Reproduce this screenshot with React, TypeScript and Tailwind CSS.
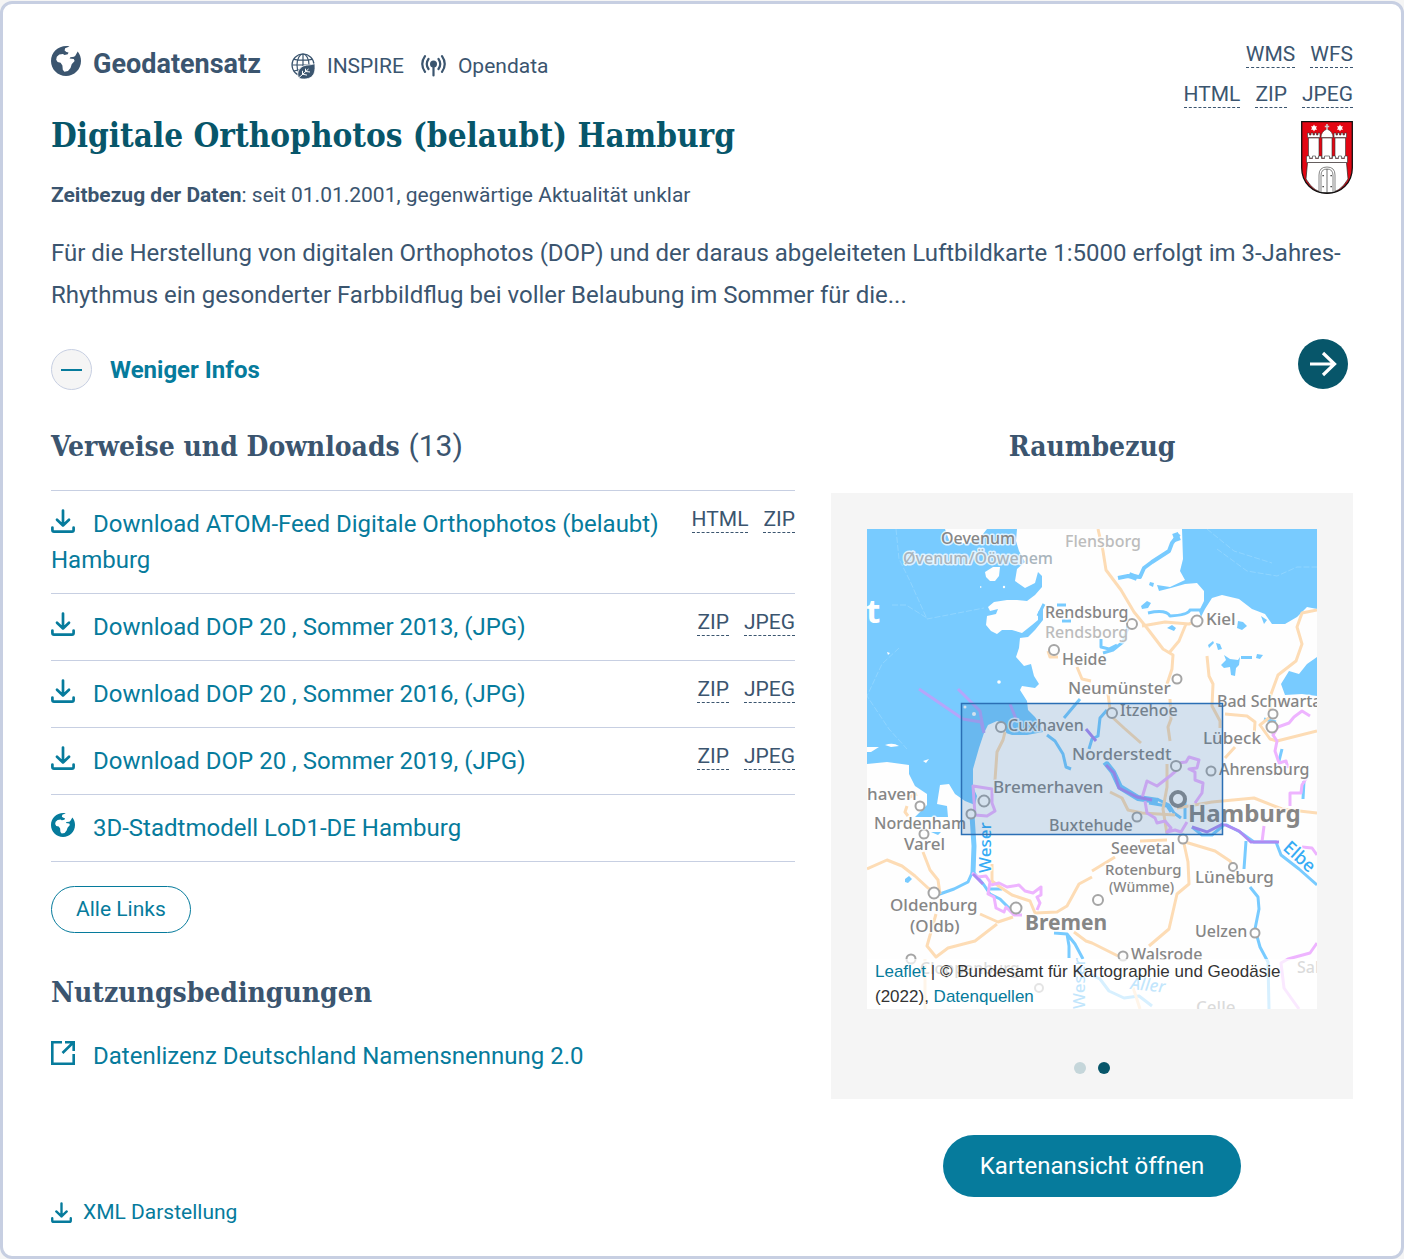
import React from "react";

const SLAB = "font-['Roboto_Slab','DejaVu_Serif_Condensed','DejaVu_Serif',serif] font-bold";

function GlobeIcon({ className }: { className: string }) {
  return (
    <svg viewBox="0 0 30 30" className={className} aria-hidden="true">
      <path
        fill="currentColor"
        d="M18.500.4C8.500-1.500 0 5.800 0 15c0 8.300 6.700 15 15 15s15-6.700 15-15c0-3.500-1-6.600-3.300-9.500l-2.400 4.300-1.300 1-3.600.4-.8 1.300 4.200.6.800 1.800-2.900 3.400-1.200 3.600-2.500 3.200-3.600.6-1.600-2-.4-4.200-1.800-2.700-3-.7-1.400-2.300.6-3 2.500-2.200 3.600-.6 1.600 1 3.300-.7.700-1.700-2.100-.7-1.800-1.300.5-2.400z"
      />
    </svg>
  );
}

function InspireIcon() {
  return (
    <svg viewBox="0 0 24 26" className="w-6 h-[26px]" aria-hidden="true">
      <g fill="none" stroke="currentColor" strokeWidth="1.200">
        <circle cx="12" cy="12" r="11" />
        <ellipse cx="12" cy="12" rx="6" ry="11" />
        <path d="M12 1v22M1 12h22M3 6.300q9 1.800 18 0M3 18q5-1.500 9-1" />
      </g>
      <path
        d="M23.800 10.500c.8 7-.4 11-3.500 13.500-3.500 2.600-10 2.500-12.500 1-2.500-4-.5-10 5-12.200 4-1.400 8-.5 11-2.300z"
        fill="currentColor"
        stroke="white"
        strokeWidth=".8"
      />
      <path d="M7 25.500l10.500-9.500M11.500 21.500v-3.700M14.500 18.700v-3M12 21.300l4 .8M15 18.500l4 .5" fill="none" stroke="white" strokeWidth="1" />
    </svg>
  );
}

function SignalIcon() {
  return (
    <svg viewBox="0 0 26 22" className="w-[26px] h-[22px]" fill="none" stroke="currentColor" strokeWidth="2.200" strokeLinecap="round" aria-hidden="true">
      <circle cx="13.500" cy="9" r="3.500" fill="currentColor" stroke="none" />
      <path d="M13.500 10v10.500M8.500 4q-3.500 5 0 10M18.500 4q3.500 5 0 10M5 1.200q-5.500 7.800 0 15.600M22 1.200q5.500 7.800 0 15.600" />
    </svg>
  );
}

function DownloadIcon({ className }: { className: string }) {
  return (
    <svg viewBox="0 0 24 24" className={className} fill="none" stroke="currentColor" strokeWidth="2.700" strokeLinecap="round" strokeLinejoin="round" aria-hidden="true">
      <path d="M12 1.500v15M6 10.800l6 5.700 6-5.700M1.400 18.500v2.500q0 1.600 1.600 1.600h18q1.600 0 1.600-1.600v-2.500" />
    </svg>
  );
}

function ExternalIcon() {
  return (
    <svg viewBox="0 0 24 24" className="inline-block w-6 h-6 mr-[18px] align-[-1px]" fill="none" stroke="currentColor" strokeWidth="2.600" aria-hidden="true">
      <path d="M11 1.300H1.300v21.400h21.400V13M11.500 12L22.500 1.300M14 1.300h8.700V10" />
    </svg>
  );
}

function Crest() {
  return (
    <svg viewBox="0 0 52 73" className="w-[52px] h-[73px]" role="img" aria-label="Wappen Hamburg">
      <path d="M.7.700h50.600v46C51.300 62 40 72.300 26 72.300S.700 62 .700 46.700z" fill="#e30613" />
      <path d="M6.500 41.500L5 58q8 14 21 14.300Q39 72 47 58l-1.500-16.500z" fill="white" stroke="#222" strokeWidth=".7" />
      <g fill="white" stroke="#333" strokeWidth=".6">
        <path d="M7.500 17h10.500v20H7.500zM34 17h10.500v20H34zM21 17h10v20H21z" />
        <path d="M6.500 16.500V12h2v2h1.500v-2h2v2h1.500v-2h2v2H17v-2h2v4.500zM33 16.500V12h2v2h1.500v-2h2v2H40v-2h2v2h1.500v-2h2v4.500z" />
        <path d="M20 16.500q0-6 6-8.500 6 2.500 6 8.500z" />
        <path d="M5.500 41.500v-6.500h3v2.500h3V35h3v2.500h3V35h3v2.500h3V35h5v2.500h3V35h3v2.500h3V35h3v2.500h3V35h3v6.500z" />
        <path d="M18 71.500V54q0-8 8-8t8 8v17.500z" />
        <path d="M20 71.500V54.500q0-6.500 6-6.500t6 6.500v17z" />
      </g>
      <path d="M26 48v24" stroke="#333" strokeWidth=".7" />
      <path d="M26 3v6M23.800 5.500h4.400" stroke="#ccc" strokeWidth="1.500" />
      <path d="M13 3.500l1 1.700h2l-1 1.800 1 1.800h-2l-1 1.700-1-1.700h-2L11 7l-1-1.800h2zM39 3.500l1 1.700h2L41 7l1 1.800h-2l-1 1.700-1-1.700h-2L37 7l-1-1.800h2z" fill="white" />
      <path d="M21.500 54h1.300v1.300h-1.300zM29.500 54h1.300v1.300h-1.300zM21.500 65h1.300v1.300h-1.300zM29.500 65h1.300v1.300h-1.300z" fill="#222" />
      <path d="M.7.700h50.600v46C51.300 62 40 72.300 26 72.300S.700 62 .700 46.700z" fill="none" stroke="#111" strokeWidth="1.300" />
    </svg>
  );
}

type Label = [string, number, number, number, string, boolean?];

const LABELS: Label[] = [
  ["Oevenum", 74, 15, 16, "#868686"],
  ["Øvenum/Ööwenem", 36, 35, 16, "#a9b4bc"],
  ["Flensborg", 198, 18, 16, "#bcbcbc"],
  ["Rendsburg", 178, 89, 16, "#868686"],
  ["Rendsborg", 178, 109, 16, "#bcbcbc"],
  ["Kiel", 339, 96, 17, "#868686"],
  ["Heide", 195, 136, 16, "#868686"],
  ["Neumünster", 201, 165, 17, "#868686"],
  ["Bad Schwarta", 350, 178, 16, "#868686"],
  ["Itzehoe", 253, 187, 16, "#868686"],
  ["Cuxhaven", 141, 202, 16, "#868686"],
  ["Lübeck", 336, 215, 17, "#868686"],
  ["Norderstedt", 205, 231, 17, "#868686"],
  ["Ahrensburg", 352, 246, 16, "#868686"],
  ["haven", 0, 271, 17, "#868686"],
  ["Bremerhaven", 126, 264, 17, "#868686"],
  ["Nordenham", 7, 300, 16, "#868686"],
  ["Buxtehude", 182, 302, 16, "#868686"],
  ["Hamburg", 321, 293, 24, "#868686", true],
  ["Seevetal", 244, 325, 16, "#868686"],
  ["Varel", 37, 321, 17, "#868686"],
  ["Rotenburg", 238, 346, 15, "#868686"],
  ["(Wümme)", 242, 363, 14, "#868686"],
  ["Lüneburg", 328, 354, 17, "#868686"],
  ["Oldenburg", 23, 382, 17, "#868686"],
  ["(Oldb)", 43, 403, 17, "#868686"],
  ["Bremen", 158, 401, 21, "#868686", true],
  ["Uelzen", 328, 408, 16, "#868686"],
  ["Walsrode", 264, 431, 16, "#868686"],
  ["Cloppenburg", 53, 445, 16, "#868686"],
  ["Sal", 430, 444, 16, "#868686"],
  ["Celle", 329, 484, 17, "#868686"],
];

const TOWNS: [number, number, number][] = [
  [187, 121, 5], [265, 95, 5], [330, 92, 5.500], [310, 150, 4.500], [245, 184, 5], [134, 198, 5],
  [406, 185, 4.500], [405, 198, 5.500], [309, 237, 5], [344, 242, 4.500], [117, 272, 5.500], [53, 277, 4.500],
  [104, 285, 4.500], [57, 305, 4.500], [270, 288, 4.500], [316, 310, 4.500], [67, 364, 5.500], [149, 379, 5.500],
  [231, 371, 5], [366, 338, 4], [388, 404, 4.500], [256, 427, 4.500], [44, 430, 4.500], [172, 459, 4],
];

function MapDrawing() {
  return (
    <svg viewBox="0 0 450 480" className="block w-full" role="img" aria-label="Karte des Raumbezugs: Hamburg und Umgebung">
      <rect width="450" height="480" fill="#fefefe" />
      {/* Meer und Seen */}
      <g fill="#78cbff">
        <path d="M0 0H150L149 12 152 22 158 33 150 40 148 52 158 59 168 54 171 43 175 47 175 58 168 66 160 72 150 71 140 71 127 73 121 78 123 82 131 80 129 85 120 87 119 96 124 102 130 105 135 101 145 101 155 104 165 96 171 91 171 83 176 78 176 91 168 101 161 108 153 109 152 119 149 128 157 137 164 135 167 147 172 155 168 159 155 157 153 161 160 172 161 181 168 188 172 194 176 203 160 206 145 206 139 204 138 195 130 192 121 196 117 204 112 219 106 240 106 258 110 267 108 276 98 272 88 265 82 255 73 256 70 275 80 277 81 288 48 288 60 276 60 265 48 257 42 245 42 236 20 233 0 235z" />
        <path d="M315 0H450V80L440 78 430 88 418 95 405 95 398 85 385 80 372 70 355 66 345 69 338 80 334 88 332 82 337 72 337 62 330 54 318 55 304 59 292 62 290 56 303 58 318 51 313 42 316 30z" />
        <path d="M450 128L440 135 432 145 422 142 414 155 418 166 435 165 450 167z" />
        <path d="M357 126l6 4 8 1 2-3-1 8-3 3-1 8-4-1-1-8-6 1-3-3 5-5zM371 92l5 1 4 4-5 4-5-2zM300 99l5-3 4 3-2 3zM274 77l6-5 4 2-3 5-6 1zM283 53l4 1-1 4-4-2zM394 87l6 4-3 4zM341 116l5-4 1 2-5 5zM349 114l4 1 2 5-4 1zM374 127h11v3h-11zM390 125l6 1-3 4-4-1zM38 350l4-3 3 3-4 4-3-1zM64 303h10l-3 3z" />
      </g>
      {/* Inseln */}
      <g fill="#fefefe">
        <path d="M118 43l8-5 7 0-1 9-4 5-5 0-4-4zM78 0h42l-8 10-12 5-18-4zM0 218l12 0-8 5-4 0zM18 216q8-3 14 1l-8 1zM56 232l6-2-3 4zM20 123l3 1-2 2zM113 57l2 1-2 1z" />
        <circle cx="107" cy="185" r="2" />
        <circle cx="98" cy="178" r="1.500" />
        <circle cx="132" cy="153" r="1.800" />
        <circle cx="137" cy="58" r="1.200" />
      </g>
      <path d="M29 0l3 30 11 22 17 38 57-11M25 76h14l21 13M32 119L15 135 0 167l22 33 18 20M340 0l27 22 38 12M350 20l30 22 30 5 20-9h20" fill="none" stroke="#8fd5ff" strokeWidth="1" strokeDasharray="6 2" />
      {/* Flüsse */}
      <g fill="none" stroke="#78cbff" strokeWidth="3" strokeLinejoin="round">
        <path strokeWidth="4" d="M312 5l-7 9-3 8-17 11-8 6-4 9-12-1-10 2" />
        <path strokeWidth="6" d="M308 4l3 8M262 46l8 3" />
        <path d="M281 84q18-4 22 3 18-1 20-6h12M262 95l-6 18-10 8-10 3M250 116l-8 4-8-2 0-8" />
        <path d="M171 87l6-12M190 76l9 0M195 92l9 0" />
        <path d="M240 181l-7 8-2 18-6 3-3 10M213 170l-16 19M180 206l8 6 8 13 3 13 5 2" />
        <path strokeWidth="6" d="M238 233l8 10 7 15 18 11 20 3" />
        <path d="M290 270l12 6 5 8 7 5M282 274l18 3 4 6M318 270l0 20" />
        <path strokeWidth="5" d="M105 286l2 31-1 27" />
        <path d="M105 344l-4 9-14 7-17 6M107 344l10 12 6 9 10 5 10 10 10 4M121 360l14 0M187 404l13 1 2 12 0 12M200 405l8 10 8 15" />
        <path d="M325 298l10 8 10 0 13-11 15 8 14 10h22l5 13 18 14 18 16M379 312l-2 28M383 358l8 10 1 12-4 20 5 18 8 15 1 47M223 445l10 5 9 12 15 7 15-2 13 10M397 190l12 3M415 220l-3 12M437 252l-1 18" />
      </g>
      {/* Autobahnen */}
      <g fill="none" stroke="#fddcb5" strokeWidth="3" strokeLinejoin="round">
        <path d="M231 0l5 22 3 19 15 20 13 22 13 16 16 21 10 6-1 14-5 15M275 97l23-4 24 2 8-3M319 95l-7 17-10 12M340 127l2 20 4 8-1 22 8 15 0 7M303 170l1 20-3 8 2 14M241 165l3 22 13 12 17 15M210 138l5 12 9 2M181 122l2 6 8 0M300 235l0 23-4 22 4 25" />
        <path d="M450 81l-15 3-5 14 5 17-6 17-18 14-8 22 0 20-10 8 10 14 7 2 40-10M358 185l22 2 8 6-1 15M358 229l10-11M310 279l35-6 42-4 28 11 35 4M138 203l-2 8-6 12-2 28M40 269l10-4M40 277l-2 6 3 4M243 263l12 6 6 12 14 3 33 2M0 340l20-9 15 6 13 10 13 12 9 4M56 323l7 18 8 10 2 14M125 335l0 17 8 6 12 8 18 6 5 12 22-1 10-6 12-22 13-7M113 385l18 8 15-5M69 385l-9 32 9 11 12-9 27-7 22-17M207 403l12 9 6 2 26 13M300 311l-27 1M248 328l-23 14M316 310l5 23 1 22-12 10-8 35-20 17M318 313l30 9 15 10 3 5M265 455l8 25M58 430v50" />
      </g>
      {/* Landesgrenzen */}
      <g fill="none" stroke="#eeb4ff" strokeWidth="3" strokeLinejoin="round">
        <path stroke="#b5a5fa" d="M52 160l44 30 18 3 3 11M91 160l22 22 4 22M143 175l6 15" />
        <path d="M106 257l19 3 0 14 3 8-8 5-12-1zM105 344l6 4 8-1 4 6-2 12 6 3 2 11 8 4 2-5 8 8 8 0M124 356l8-2 8 4 12-2 6 6 8 2 8-6 0 8-4 2 3 6-3 7" />
        <path d="M275 269l5-17 10 5 13-10 8-7 0-6 8-1 3-5 10 3-2 8-8 1 6 3 0 8 8 3-1 10-7 10M278 272l2 12 8 5 2 5 8-2 6 7-4 4 8-2 6 2 6-10" />
        <path d="M443 187l-8-5-8 6-5 6-11 4-5 8 4 6-2 10 4 12 7-2 2 7M440 248l-5 8-1 8-11 0v13M397 297l-2 16M435 318l10 1 5 7M450 414l-7 10-22 6-7 4 3 25 15 21" />
      </g>
      <path d="M219 200l10 12M239 236l8 8 5 15 18 9 15 3M325 298l15 5 16-8 16 7 12 11 28 0M106 345l10 10" fill="none" stroke="#ac8bf3" strokeWidth="3" />
      <g fill="#fefefe" stroke="#a5a5a5" strokeWidth="2">
        {TOWNS.map(([x, y, r]) => (
          <circle key={`${x}-${y}`} cx={x} cy={y} r={r} />
        ))}
        <circle cx="311" cy="270" r="7" strokeWidth="4" stroke="#8b8b8b" />
      </g>
      <g className="font-['Noto_Sans','Open_Sans',sans-serif]" stroke="white" strokeOpacity=".75" strokeWidth="3" strokeLinejoin="round">
        {LABELS.map(([text, x, y, size, fill, bold]) => (
          <text key={text} x={x} y={y} fontSize={size} fill={fill} fontWeight={bold ? 700 : 500} paintOrder="stroke">
            {text}
          </text>
        ))}
        <g fill="#35abf5" paintOrder="stroke" fontSize="17" fontWeight="500">
          <text transform="translate(124 344) rotate(-90)">Weser</text>
          <text transform="translate(415 320) rotate(42)" fontSize="18">Elbe</text>
          <text transform="translate(263 460) rotate(6)" fontStyle="italic">Aller</text>
          <text transform="translate(218 480) rotate(-90)">Weser</text>
        </g>
        <text x="-1" y="94" fontSize="33" fontWeight="700" fill="white" stroke="none">t</text>
      </g>
      <rect x="94.500" y="174.500" width="261" height="131" fill="#2b6cb0" fillOpacity=".2" stroke="#2b6fb5" strokeWidth="1.500" />
    </svg>
  );
}

function Formats({ names }: { names: string[] }) {
  return (
    <span className="flex shrink-0 gap-[15px] text-[21px] leading-[26px] text-[#3b556f]">
      {names.map((name) => (
        <abbr key={name} title={name} className="no-underline border-b border-dashed border-[#3b556f]">
          {name}
        </abbr>
      ))}
    </span>
  );
}

const LINKS = [
  { label: "Download ATOM-Feed Digitale Orthophotos (belaubt) Hamburg", formats: ["HTML", "ZIP"] },
  { label: "Download DOP 20 , Sommer 2013, (JPG)", formats: ["ZIP", "JPEG"] },
  { label: "Download DOP 20 , Sommer 2016, (JPG)", formats: ["ZIP", "JPEG"] },
  { label: "Download DOP 20 , Sommer 2019, (JPG)", formats: ["ZIP", "JPEG"] },
  { label: "3D-Stadtmodell LoD1-DE Hamburg", formats: [] },
];

export default function App() {
  return (
    <div className="bg-[#f5f5f5] pt-px font-['Roboto',sans-serif] text-[#3b556f]">
      <article className="rounded-xl border-[3px] border-[#c7cfe2] bg-white px-12 pt-9 pb-7">
        <header className="flex items-start justify-between gap-6">
          <div>
            <div className="flex items-end h-11">
              <GlobeIcon className="w-[30px] h-[30px] mr-3 mb-2" />
              <span className="text-[27px] leading-10 font-bold">Geodatensatz</span>
              <span className="flex items-center gap-3 ml-[30px] text-[21px] leading-9">
                <InspireIcon />
                INSPIRE
              </span>
              <span className="flex items-center gap-3 ml-4 text-[21px] leading-9">
                <SignalIcon />
                Opendata
              </span>
            </div>
            <h1 className={`${SLAB} mt-7 text-[33px] leading-[48px] text-[#07566a]`}>
              <a href="#titel">Digitale Orthophotos (belaubt) Hamburg</a>
            </h1>
            <p className="mt-[19px] text-[21px] leading-8">
              <strong>Zeitbezug der Daten</strong>: seit 01.01.2001, gegenwärtige Aktualität unklar
            </p>
          </div>
          <div className="mt-px flex flex-col items-end gap-[13px]">
            <Formats names={["WMS", "WFS"]} />
            <Formats names={["HTML", "ZIP", "JPEG"]} />
            <Crest />
          </div>
        </header>

        <p className="mt-[21px] text-[24px] leading-[42px]">
          Für die Herstellung von digitalen Orthophotos (DOP) und der daraus abgeleiteten Luftbildkarte 1:5000 erfolgt im
          3-Jahres-Rhythmus ein gesonderter Farbbildflug bei voller Belaubung im Sommer für die...
        </p>

        <div className="mt-[23px] flex items-start justify-between">
          <button type="button" className="mt-[10px] flex items-center gap-[18px] text-[24px] leading-8 font-bold text-[#067b9c]">
            <span className="flex size-[41px] items-center justify-center rounded-full border border-[#c7cfe2] bg-[#f5f5f5]">
              <span className="h-[2px] w-[21px] bg-[#067b9c]" />
            </span>
            Weniger Infos
          </button>
          <a href="#details" aria-label="Zur Detailansicht" className="mr-[5px] flex size-[50px] items-center justify-center rounded-full bg-[#07566a] text-white">
            <svg viewBox="0 0 28 26" className="w-7 h-[26px]" fill="none" stroke="currentColor" strokeWidth="3.200" aria-hidden="true">
              <path d="M1 13h24M14 2l11.500 11L14 24" />
            </svg>
          </a>
        </div>

        <div className="mt-[37px] grid grid-cols-[744fr_522fr] gap-x-9">
          <div className="flex flex-col">
            <h2 className={`${SLAB} text-[28px] leading-10`}>
              Verweise und Downloads{" "}
              <span className="font-['Roboto',sans-serif] text-[30px] leading-none font-normal">(13)</span>
            </h2>
            <ul className="mt-[23px] border-b border-[#c7cfe2]">
              {LINKS.map(({ label, formats }) => (
                <li key={label} className="flex items-start justify-between gap-6 border-t border-[#c7cfe2] py-[15px] text-[24px] leading-9">
                  <a href="#download" className="text-[#067b9c]">
                    {formats.length > 0 ? (
                      <DownloadIcon className="inline-block w-6 h-6 mr-[18px] align-[-1px]" />
                    ) : (
                      <GlobeIcon className="inline-block w-6 h-6 mr-[18px] align-[-1px]" />
                    )}
                    {label}
                  </a>
                  <Formats names={formats} />
                </li>
              ))}
            </ul>
            <button type="button" className="mt-6 self-start rounded-full border border-[#067b9c] px-6 text-[21px] leading-[45px] text-[#067b9c]">
              Alle Links
            </button>
            <h2 className={`${SLAB} mt-10 text-[28px] leading-10`}>Nutzungsbedingungen</h2>
            <p className="mt-[25px] text-[24px] leading-9">
              <a href="#lizenz" className="text-[#067b9c]">
                <ExternalIcon />
                Datenlizenz Deutschland Namensnennung 2.0
              </a>
            </p>
            <a href="#xml" className="mt-auto flex items-center gap-[11px] self-start text-[21px] leading-8 text-[#067b9c]">
              <DownloadIcon className="w-[21px] h-[21px]" />
              XML Darstellung
            </a>
          </div>

          <div className="flex flex-col items-center pb-[31px]">
            <h2 className={`${SLAB} text-[28px] leading-10`}>Raumbezug</h2>
            <div className="mt-[26px] flex w-full flex-col items-center bg-[#f5f5f5] px-9 pt-9 pb-[25px]">
              <div className="relative w-full overflow-hidden">
                <MapDrawing />
                <p className="absolute inset-x-0 bottom-0 bg-white/70 px-2 font-['Liberation_Sans',sans-serif] text-[17px] leading-[25px] text-[#333]">
                  <a href="#leaflet" className="text-[#067b9c]">Leaflet</a> | © Bundesamt für Kartographie und Geodäsie (2022),{" "}
                  <a href="#quellen" className="text-[#067b9c]">Datenquellen</a>
                </p>
              </div>
              <div className="mt-[53px] flex gap-3">
                <button type="button" aria-label="Bild 1" className="size-3 rounded-full bg-[#c5d6da]" />
                <button type="button" aria-label="Bild 2" className="size-3 rounded-full bg-[#07566a]" />
              </div>
            </div>
            <button type="button" className="mt-9 rounded-full bg-[#067b9c] px-[37px] text-[24px] leading-[62px] text-white">
              Kartenansicht öffnen
            </button>
          </div>
        </div>
      </article>
    </div>
  );
}
